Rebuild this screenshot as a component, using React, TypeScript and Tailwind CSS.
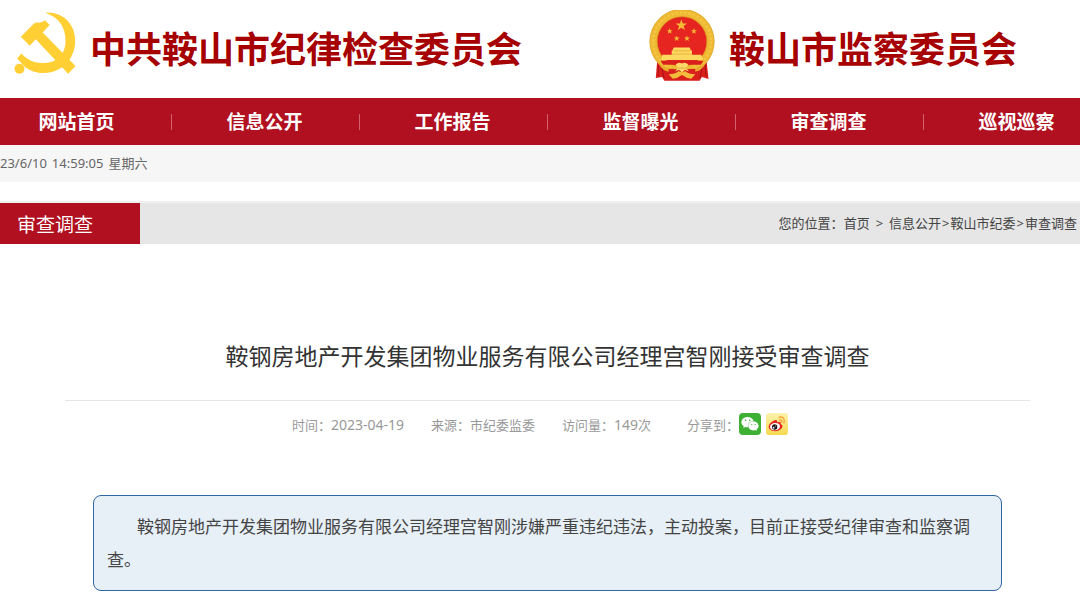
import React from 'react';
import { FaWeixin } from 'react-icons/fa';

const navItems = ['网站首页', '信息公开', '工作报告', '监督曝光', '审查调查', '巡视巡察'];

/* ---------------- Logos ---------------- */
const PartyLogo: React.FC = () => (
  <svg viewBox="41 35 186 187" className="mb-3 h-[62px] w-[62px] shrink-0" fill="#ffcf33" aria-hidden="true">
    <path d="M135 37C186 34 225 70 225 121C225 145 218 166 205 182C187 206 160 219 130 219C107 219 89 212 73 200L50 175L63 160C83 182 107 190 132 189C173 187 197 160 196 119C195 80 175 50 135 37Z" />
    <path d="M61 110L101 70Q106 66 112 67Q123 69 134 60L148 74L127 97L226 198L204 221L106 117L88 137Z" />
    <circle cx="57" cy="206" r="15" />
  </svg>
);

const star = 'M0 -10L2.4 -3.1L9.5 -3.1L3.8 1.2L5.9 8.1L0 4L-5.9 8.1L-3.8 1.2L-9.5 -3.1L-2.4 -3.1Z';

const StateEmblem: React.FC = () => (
  <svg viewBox="57 27 198 214" className="mb-2 h-[71px] w-[66px] shrink-0" aria-hidden="true">
    <path d="M82 170L77 232L96 229L103 240H209L216 229L236 235L229 170Z" fill="#d81f1c" />
    <path d="M86 192L84 226M95 200L102 232M226 192L228 226M217 200L210 232" stroke="#a81216" strokeWidth="3" />
    <circle cx="156" cy="122" r="86" fill="#e62420" stroke="#efba33" strokeWidth="23" />
    <circle cx="156" cy="122" r="97" fill="none" stroke="#dfa32a" strokeWidth="2" />
    <circle cx="156" cy="122" r="87" fill="none" stroke="#f6cf50" strokeWidth="7" strokeDasharray="8 5" opacity="0.6" />
    <circle cx="156" cy="122" r="75" fill="none" stroke="#d48b1a" strokeWidth="2" />
    <g fill="#f5bb35">
      <path d={star} transform="translate(154 73) scale(1.8)" />
      <path d={star} transform="translate(119 91) scale(0.95)" />
      <path d={star} transform="translate(192 91) scale(0.95)" />
      <path d={star} transform="translate(140 113) scale(0.95)" />
      <path d={star} transform="translate(171 113) scale(0.95)" />
    </g>
    <path d="M131 140H179L183 149H186V162H214L220 178H92L97 162H125V149H127Z" fill="#ffd95f" />
    <path d="M125 160H186M130 150H181" stroke="#e0a030" strokeWidth="2" />
    <path d="M91 180H221L213 192H99Z" fill="#d9201d" />
    <path d="M84 187Q108 206 133 201L126 213Q99 216 84 187ZM228 187Q204 206 179 201L186 213Q213 216 228 187Z" fill="#e9ab2e" />
    <path d="M116 205H196V222H116Z" fill="#d9201d" />
    <path d="M137 191Q146 183 156 188Q166 183 175 191L169 202L177 212L165 207L156 216L147 207L135 212L143 202Z" fill="#ffda69" />
    <path d="M116 221Q136 221 146 211Q156 219 166 211Q176 221 196 221L184 234Q169 233 156 223Q143 233 128 234Z" fill="#f3bd3b" />
    <path d="M142 202H170" fill="none" stroke="#d48b2a" strokeWidth="2" />
  </svg>
);

const WeiboIcon: React.FC = () => (
  <svg viewBox="0 0 66 66" className="h-[22px] w-[22px]" aria-hidden="true">
    <defs>
      <linearGradient id="weibo-bg" x1="0" y1="0" x2="0" y2="1">
        <stop offset="0" stopColor="#fbf3ae" />
        <stop offset="1" stopColor="#f6d94f" />
      </linearGradient>
    </defs>
    <rect width="66" height="66" rx="10" fill="url(#weibo-bg)" />
    <path d="M26 22C32 19 35 22 33 28C40 25 46 26 44 33C50 35 51 40 47 46C40 56 20 58 11 49C3 40 13 27 26 22Z" fill="#e32620" />
    <ellipse cx="27" cy="41" rx="15" ry="11" fill="#fff" transform="rotate(-8 27 41)" />
    <circle cx="26" cy="42" r="8" fill="#1c1412" />
    <circle cx="23" cy="44" r="2.5" fill="#fff" />
    <circle cx="29" cy="39" r="1.5" fill="#fff" />
    <path d="M39 13C50 9 58 18 54 30M40 21C46 19 49 23 47 28" fill="none" stroke="#f5a13a" strokeWidth="4" strokeLinecap="round" />
  </svg>
);

const App: React.FC = () => {
  return (
    <div className="min-h-screen overflow-hidden bg-white font-['Noto_Sans','Noto_Sans_CJK_SC',sans-serif] text-[13px] text-[#444]">
      {/* Header */}
      <header className="flex h-[98px] items-center font-bold text-[#a60000]">
        <div className="flex w-3/5 items-center gap-3.5 pl-3.5">
          <PartyLogo />
          <h1 className="pt-0.5 text-[36px] leading-[48px] whitespace-nowrap">中共鞍山市纪律检查委员会</h1>
        </div>
        <div className="flex items-center gap-3.5 pl-px">
          <StateEmblem />
          <h1 className="pt-0.5 text-[36px] leading-[48px] whitespace-nowrap">鞍山市监察委员会</h1>
        </div>
      </header>

      {/* Navigation */}
      <nav className="bg-[#b01020]">
        <ul className="-ml-4 grid h-[47px] w-[calc(100%+48px)] grid-cols-6 items-center">
          {navItems.map((item) => (
            <li key={item} className="flex h-4 items-center justify-center border-r border-[#d4606b] pt-0.5 pr-0.5">
              <a href="#" className="text-[19px] font-bold text-white">
                {item}
              </a>
            </li>
          ))}
        </ul>
      </nav>

      {/* Date */}
      <div className="flex h-[37px] gap-[5px] bg-[#f6f6f6] leading-[37px] whitespace-nowrap text-[#666]">
        <span>23/6/10</span>
        <span>14:59:05</span>
        <span>星期六</span>
      </div>

      {/* Breadcrumb */}
      <div className="mt-[19px] flex items-center justify-between border-t-2 border-[#f0f0f0] bg-[#e6e6e6]">
        <h2 className="w-[140px] bg-[#b01020] pt-1 pl-[17px] text-[19px] leading-[37px] text-white">审查调查</h2>
        <div className="pr-[3px] whitespace-nowrap">
          您的位置：<a href="#">首页</a>
          <span className="mx-1.5">&gt;</span>
          <a href="#">信息公开</a>
          <span className="mx-px">&gt;</span>
          <a href="#">鞍山市纪委</a>
          <span className="mx-px">&gt;</span>
          <a href="#">审查调查</a>
        </div>
      </div>

      {/* Article */}
      <main className="pt-[94px] pr-[50px] pl-[65px]">
        <h2 className="border-b border-[#e5e5e5] pb-[26px] text-center text-[23px] leading-9 text-[#333]">
          鞍钢房地产开发集团物业服务有限公司经理宫智刚接受审查调查
        </h2>

        <div className="mt-3 flex h-[22px] items-center justify-center pr-[15px] leading-5 text-[#999]">
          <span className="mr-[27px] pt-0.5">
            时间：<span className="text-sm">2023-04-19</span>
          </span>
          <span className="mr-[27px] pt-0.5">来源：市纪委监委</span>
          <span className="mr-9 pt-0.5">
            访问量：<span className="text-sm">149</span>次
          </span>
          <span className="pt-0.5">分享到：</span>
          <button
            type="button"
            aria-label="分享到微信"
            className="flex h-[22px] w-[22px] items-center justify-center rounded bg-[#3eb135] text-white"
          >
            <FaWeixin size={18} />
          </button>
          <button type="button" aria-label="分享到微博" className="ml-[5px]">
            <WeiboIcon />
          </button>
        </div>

        <div className="mt-[60px] mr-7 ml-7 rounded-lg border border-[#2f66a3] bg-[#e7eff7] py-3.5 pr-5 pl-[13px]">
          <p className="indent-[30px] text-[17px] leading-[33px]">
            鞍钢房地产开发集团物业服务有限公司经理宫智刚涉嫌严重违纪违法，主动投案，目前正接受纪律审查和监察调查。
          </p>
        </div>
      </main>
    </div>
  );
};

export default App;
